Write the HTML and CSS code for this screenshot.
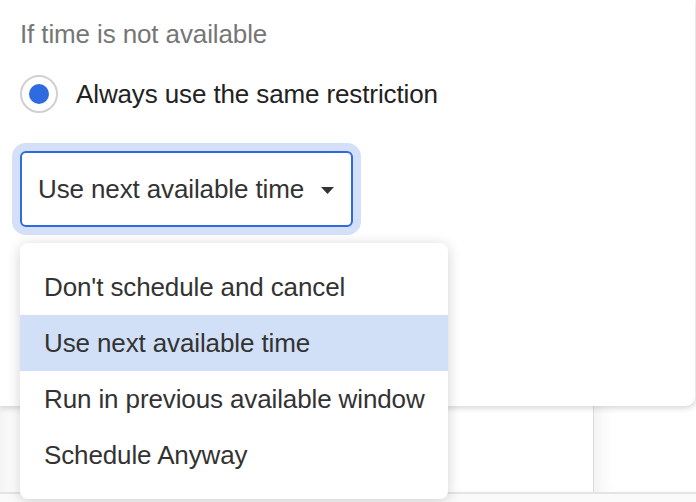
FILE: index.html
```html
<!DOCTYPE html>
<html>
<head>
<meta charset="utf-8">
<link rel="stylesheet" href="styles.css">
</head>
<body>
<div class="page">
  <div class="card">
    <div class="title">If time is not available</div>
    <div class="radio-row">
      <span class="radio"><span class="dot"></span></span>
      <span class="radio-label">Always use the same restriction</span>
    </div>
    <div class="select">
      <span class="select-text">Use next available time</span>
      <svg class="caret" width="13" height="7" viewBox="0 0 13 7"><path d="M0 0 H13 L6.5 7 Z" fill="#333"/></svg>
    </div>
  </div>
  <div class="table">
    <div class="cell cell-main"></div>
    <div class="cell cell-side"></div>
  </div>
  <ul class="menu">
    <li class="item">Don't schedule and cancel</li>
    <li class="item selected">Use next available time</li>
    <li class="item">Run in previous available window</li>
    <li class="item">Schedule Anyway</li>
  </ul>
</div>
</body>
</html>
```

FILE: styles.css
```css
html, body {
  margin: 0;
  padding: 0;
  background: #fafafa;
  font-family: "Liberation Sans", Arial, Helvetica, sans-serif;
}

.page {
  position: relative;
  width: 696px;
  height: 502px;
  overflow: hidden;
  letter-spacing: -0.12px;
}

.card {
  position: relative;
  z-index: 1;
  width: 695px;
  height: 406px;
  box-sizing: border-box;
  padding: 18px 0 0 20px;
  background: #fff;
  border-bottom-right-radius: 9px;
  box-shadow: 0 2px 6px rgba(0, 0, 0, 0.16);
}

.title {
  font-size: 26px;
  line-height: 32px;
  color: #767676;
}

.radio-row {
  display: flex;
  align-items: center;
  gap: 18px;
  margin-top: 25px;
  height: 38px;
}

.radio {
  width: 38px;
  height: 38px;
  box-sizing: border-box;
  border: 2px solid #d0d0d0;
  border-radius: 50%;
  display: flex;
  align-items: center;
  justify-content: center;
}

.dot {
  width: 20px;
  height: 20px;
  border-radius: 50%;
  background: #2f6be0;
}

.radio-label {
  font-size: 26px;
  line-height: 32px;
  color: #222;
}

.select {
  margin-top: 38px;
  width: 333px;
  height: 76px;
  box-sizing: border-box;
  border: 2px solid #2f6be0;
  border-radius: 6px;
  box-shadow: 0 0 0 8px #d4e0f7;
  display: flex;
  align-items: center;
  padding-left: 16px;
  gap: 17px;
  background: #fff;
}

.select-text {
  font-size: 26px;
  line-height: 32px;
  color: #333;
}

.caret {
  display: block;
  margin-top: 2px;
}

.table {
  display: flex;
  height: 86px;
  border-bottom: 2px solid #e4e4e4;
}

.cell {
  background: #fff;
  box-shadow: inset 14px 0 18px -10px rgba(0, 0, 0, 0.07);
}

.cell-main {
  width: 593px;
  border-right: 1px solid #dcdcdc;
}

.cell-side {
  flex: 1;
}

.menu {
  position: absolute;
  z-index: 2;
  left: 20px;
  top: 243px;
  width: 428px;
  margin: 0;
  padding: 16px 0;
  list-style: none;
  background: #fff;
  border-radius: 8px;
  box-shadow: 0 2px 14px rgba(0, 0, 0, 0.18);
}

.item {
  height: 56px;
  display: flex;
  align-items: center;
  padding-left: 24px;
  font-size: 26px;
  color: #333;
}

.item.selected {
  background: #d2e0f7;
}
```
